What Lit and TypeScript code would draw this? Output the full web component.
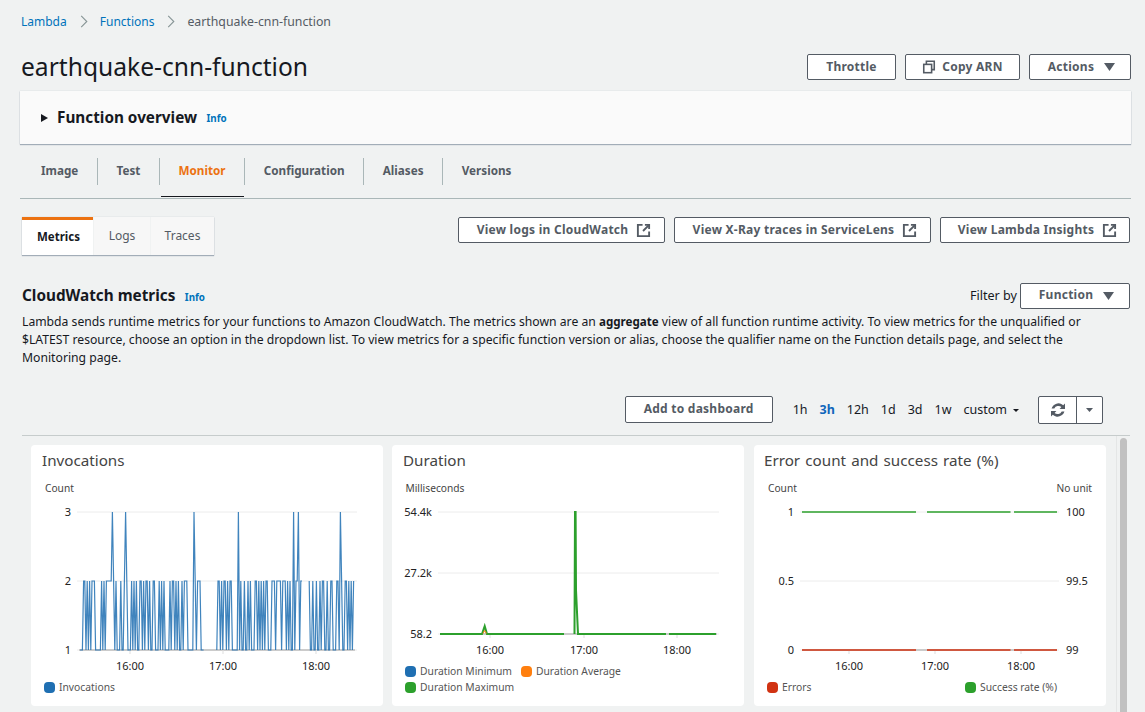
import { LitElement, html, svg, css } from 'lit';
import { customElement } from 'lit/decorators.js';

type Line = { color: string; width?: number; opacity?: number; segments: number[][][] };

interface Chart {
  title: string;
  left: number; // page x of the card, the svg is drawn in page coordinates
  height: number;
  x0: number;
  x1: number;
  grid: { y: number; label: string; right?: string }[];
  ticks: { x: number; label: string }[];
  tickY: number;
  unit: string;
  unitX: number;
  unitRight?: string;
  lines: Line[];
  legend: { color: string; label: string }[][];
  split?: boolean;
}

const BLUE = '#1f6fb2';
const ORANGE = '#ff7f0e';
const GREEN = '#2ca02c';
const RED = '#d13212';

// fixed seed, so the busy invocations line is the same on every run
function invocationSegments(): number[][][] {
  let seed = 20517;
  const rnd = () => {
    seed = (seed * 16807) % 2147483647;
    return seed / 2147483647;
  };
  const spikes = [113, 125.5, 194.5, 238, 294, 298, 340.5];
  const segments: number[][][] = [];
  let current: number[][] = [];
  let v = 2;
  for (let x = 80; x <= 354; x += 1.2) {
    if ((x > 204 && x < 216) || (x > 302 && x < 309)) {
      if (current.length) segments.push(current);
      current = [];
      continue;
    }
    const r = rnd();
    v = v === 2 ? (r < 0.6 ? 1 : 2) : r < 0.7 ? 2 : 1;
    let y = v === 2 ? 581 : 650;
    if (spikes.some((s) => Math.abs(s - x) < 0.6)) y = 512;
    current.push([x, y]);
  }
  if (current.length) segments.push(current);
  return segments;
}

const CHARTS: Chart[] = [
  {
    title: 'Invocations',
    left: 31,
    height: 192,
    x0: 79,
    x1: 355,
    grid: [
      { y: 512, label: '3' },
      { y: 581, label: '2' },
      { y: 650, label: '1' },
    ],
    ticks: [
      { x: 130, label: '16:00' },
      { x: 223, label: '17:00' },
      { x: 316, label: '18:00' },
    ],
    tickY: 666,
    unit: 'Count',
    unitX: 45,
    lines: [{ color: BLUE, width: 1.2, opacity: 0.85, segments: invocationSegments() }],
    legend: [[{ color: BLUE, label: 'Invocations' }]],
  },
  {
    title: 'Duration',
    left: 392,
    height: 183,
    x0: 440,
    x1: 717,
    grid: [
      { y: 512, label: '54.4k' },
      { y: 573, label: '27.2k' },
      { y: 634, label: '58.2' },
    ],
    ticks: [
      { x: 490, label: '16:00' },
      { x: 584, label: '17:00' },
      { x: 677, label: '18:00' },
    ],
    tickY: 650,
    unit: 'Milliseconds',
    unitX: 405.5,
    lines: [
      {
        color: GREEN,
        width: 2,
        segments: [
          [[440, 634], [482, 634], [484.7, 626], [487, 634], [564, 634]],
          [[574.5, 634], [575, 512], [575.6, 512], [576, 590], [578, 634], [666, 634]],
          [[669, 634], [716, 634]],
        ],
      },
      { color: ORANGE, width: 1, segments: [[[483, 633.5], [484.7, 630.5], [486.4, 633.5]]] },
    ],
    legend: [
      [
        { color: BLUE, label: 'Duration Minimum' },
        { color: ORANGE, label: 'Duration Average' },
      ],
      [{ color: GREEN, label: 'Duration Maximum' }],
    ],
  },
  {
    title: 'Error count and success rate (%)',
    left: 754,
    height: 192,
    x0: 802,
    x1: 1057,
    grid: [
      { y: 512, label: '1', right: '100' },
      { y: 581, label: '0.5', right: '99.5' },
      { y: 650, label: '0', right: '99' },
    ],
    ticks: [
      { x: 849, label: '16:00' },
      { x: 935, label: '17:00' },
      { x: 1021, label: '18:00' },
    ],
    tickY: 666,
    unit: 'Count',
    unitX: 768,
    unitRight: 'No unit',
    lines: [
      {
        color: GREEN,
        width: 1.6,
        segments: [
          [[802, 512], [916, 512]],
          [[927, 512], [1010.5, 512]],
          [[1014, 512], [1057, 512]],
        ],
      },
      {
        color: RED,
        width: 1.6,
        segments: [
          [[802, 650], [916, 650]],
          [[927, 650], [1010.5, 650]],
          [[1014, 650], [1057, 650]],
        ],
      },
    ],
    legend: [
      [
        { color: RED, label: 'Errors' },
        { color: GREEN, label: 'Success rate (%)' },
      ],
    ],
    split: true,
  },
];

const externalIcon = html`<svg class="icon ext-icon" viewBox="0 0 16 16" fill="none" stroke="currentColor" stroke-width="2">
  <path d="M7 2H2v12h12V9" /><path d="M9.5 2H14v4.5" /><path d="M14 2L7.5 8.5" />
</svg>`;

const copyIcon = html`<svg class="icon" viewBox="0 0 16 16" fill="none" stroke="currentColor" stroke-width="1.8">
  <rect x="2" y="5" width="9" height="9.5" /><path d="M5 5V1.5h9v9.5h-3" />
</svg>`;

const caret = html`<svg class="caret" viewBox="0 0 10 8" preserveAspectRatio="none">
  <path d="M0 0h10L5 8z" fill="currentColor" />
</svg>`;

const chevron = html`<svg class="chevron" viewBox="0 0 8 14" fill="none" stroke="#879596" stroke-width="1.2">
  <path d="M1 1l6 6-6 6" />
</svg>`;

@customElement('metric-card')
export class MetricCard extends LitElement {
  static properties = { chart: { attribute: false } };
  chart!: Chart;

  static styles = css`
    :host {
      display: flex;
      flex-direction: column;
      width: 352px;
      height: 261px;
      box-sizing: border-box;
      padding: 5px 0 11px;
      background: #fff;
      border-radius: 4px;
      font-family: 'Noto Sans', sans-serif;
    }
    :host(:nth-child(3)) {
      margin-left: 1px;
    }
    :host(:nth-child(3)) .title {
      padding-left: 10px;
      word-spacing: 1.2px;
    }
    .title {
      font-size: 15.2px;
      line-height: 20px;
      color: #444;
      padding-left: 11px;
      white-space: nowrap;
    }
    svg {
      display: block;
      width: 352px;
      flex: none;
      margin-top: 10px;
      font-family: 'Noto Sans', sans-serif;
    }
    .unit {
      font-size: 10.2px;
      fill: #444;
    }
    .label {
      font-size: 11px;
      fill: #222;
    }
    .legend {
      margin-top: auto;
      padding: 0 13px;
    }
    .legend-row {
      display: flex;
      height: 16px;
      align-items: center;
      gap: 9px;
    }
    .legend-row.split {
      justify-content: space-between;
      padding-right: 36px;
    }
    .item {
      display: flex;
      align-items: center;
      gap: 4px;
      font-size: 10.3px;
      color: #555;
      white-space: nowrap;
    }
    .swatch {
      width: 11px;
      height: 11px;
      border-radius: 4px;
    }
  `;

  private renderLine(line: Line) {
    return line.segments.map(
      (seg) => svg`<polyline
        points=${seg.map((p) => p.join(',')).join(' ')}
        fill="none"
        stroke=${line.color}
        stroke-width=${line.width ?? 1.2}
        stroke-opacity=${line.opacity ?? 1}
      />`
    );
  }

  render() {
    const c = this.chart;
    const base = c.grid[c.grid.length - 1].y;
    return html`
      <div class="title">${c.title}</div>
      <svg viewBox="${c.left} 480 352 ${c.height}" height=${c.height}>
        <text class="unit" x=${c.unitX} y="492">${c.unit}</text>
        ${c.unitRight
          ? svg`<text class="unit" x=${c.left + 338} y="492" text-anchor="end">${c.unitRight}</text>`
          : ''}
        ${c.grid.map(
          (g) => svg`
            <line x1=${c.x0 - 2} x2=${c.x1 + 2} y1=${g.y} y2=${g.y} stroke="#ececec" />
            <text class="label" x=${c.x0 - 8} y=${g.y + 4} text-anchor="end">${g.label}</text>
            ${g.right ? svg`<text class="label" x=${c.x1 + 9} y=${g.y + 4}>${g.right}</text>` : ''}
          `
        )}
        <line x1=${c.x0} x2=${c.x1} y1=${base} y2=${base} stroke="#bdbdbd" stroke-width="1.6" />
        ${c.ticks.map(
          (t) => svg`
            <line x1=${t.x} x2=${t.x} y1=${base} y2=${base + 4} stroke="#ddd" />
            <text class="label" x=${t.x} y=${c.tickY + 4} text-anchor="middle">${t.label}</text>
          `
        )}
        ${c.lines.map((l) => this.renderLine(l))}
      </svg>
      <div class="legend">
        ${c.legend.map(
          (row) => html`<div class="legend-row ${c.split ? 'split' : ''}">
            ${row.map(
              (it) => html`<span class="item">
                <span class="swatch" style="background:${it.color}"></span>${it.label}
              </span>`
            )}
          </div>`
        )}
      </div>
    `;
  }
}

@customElement('app-root')
export class AppRoot extends LitElement {
  static styles = css`
    :host {
      display: block;
      width: 1145px;
      height: 712px;
      overflow: hidden;
      background: #f0f2f2;
      font-family: 'Noto Sans', sans-serif;
      color: #16191f;
    }
    .page {
      padding: 14px 14px 0 20px;
    }
    .crumbs {
      display: flex;
      align-items: center;
      height: 14px;
      margin-left: 1px;
      font-size: 12px;
      color: #545b64;
    }
    .crumbs a {
      color: #0073bb;
    }
    .crumbs span {
      font-size: 12.3px;
    }
    .chevron {
      width: 8px;
      height: 13px;
      margin: 0 12px 0 13px;
    }
    .title-row {
      display: flex;
      align-items: center;
      justify-content: space-between;
      height: 26px;
      margin: 26px 0 0 1px;
    }
    h1 {
      margin: 0 0 2px;
      font-size: 24.6px;
      font-weight: 400;
      color: #16191f;
    }
    .btn-group {
      display: flex;
      gap: 9px;
    }
    .btn {
      display: flex;
      align-items: center;
      justify-content: center;
      gap: 9px;
      box-sizing: border-box;
      height: 26px;
      padding-bottom: 2px;
      border: 1px solid #545b64;
      border-radius: 2px;
      background: #fff;
      color: #545b64;
      font-size: 12px;
      font-weight: 700;
      letter-spacing: 0.25px;
      white-space: nowrap;
    }
    .btn.copy {
      gap: 6px;
    }
    .btn.drop {
      gap: 10px;
      padding-left: 3px;
    }
    .btn.ext {
      gap: 8px;
      padding-left: 3px;
    }
    .icon {
      width: 14px;
      height: 14px;
      margin-top: 2px;
    }
    .ext-icon {
      width: 15px;
      height: 15px;
      margin-right: -2px;
    }
    .caret {
      width: 11px;
      height: 8px;
      margin-top: 2px;
    }
    .overview {
      display: flex;
      align-items: center;
      height: 53px;
      margin-top: 11px;
      padding: 0 0 2px 21px;
      box-sizing: border-box;
      background: #fafafa;
      box-shadow: 0 1px 1px rgba(0, 31, 63, 0.3), 0 0 1px rgba(0, 31, 63, 0.2);
    }
    .overview .arrow {
      width: 0;
      height: 0;
      margin: 2px 9px 0 0;
      border-style: solid;
      border-width: 4.5px 0 4.5px 7px;
      border-color: transparent transparent transparent #16191f;
    }
    .overview b,
    .heading-row b {
      font-size: 15.3px;
      font-weight: 700;
    }
    .overview .info {
      margin-top: 4px;
    }
    .info {
      margin-left: 9.5px;
      font-size: 9.8px;
      font-weight: 700;
      color: #0073bb;
    }
    .tabs {
      display: flex;
      align-items: flex-start;
      height: 40px;
      margin-top: 14px;
      padding-left: 2.4px;
      border-bottom: 1px solid #aab7b8;
    }
    .tab {
      position: relative;
      padding: 0 18.6px;
      height: 27px;
      line-height: 25px;
      border-left: 1px solid #aab7b8;
      font-size: 11.7px;
      font-weight: 700;
      color: #545b64;
    }
    .tab:first-child {
      border-left: 0;
    }
    .tab.active {
      color: #ec7211;
    }
    .tab.active::after {
      content: '';
      position: absolute;
      left: 1px;
      right: 0;
      top: 38px;
      height: 1px;
      background: #16191f;
    }
    .sub-row {
      display: flex;
      justify-content: space-between;
      margin: 18px 1px 0 2px;
      height: 38px;
    }
    .subtabs {
      display: flex;
      gap: 1px;
      box-shadow: 0 1px 1px rgba(0, 31, 63, 0.3), 0 0 1px rgba(0, 31, 63, 0.2);
    }
    .subtab {
      display: flex;
      align-items: center;
      justify-content: center;
      box-sizing: border-box;
      height: 38px;
      padding-bottom: 2px;
      background: #f7f7f7;
      font-size: 12px;
      color: #545b64;
    }
    .subtab.active {
      padding-left: 2px;
      background: #fff;
      border-top: 3px solid #ec7211;
      color: #16191f;
      font-size: 11.5px;
      font-weight: 700;
    }
    .heading-row {
      display: flex;
      align-items: center;
      justify-content: space-between;
      height: 27px;
      margin: 27px 1px 0 2px;
    }
    .heading-row > div:first-child {
      padding-bottom: 2px;
    }
    .filter {
      display: flex;
      align-items: center;
      gap: 3px;
      font-size: 12.6px;
    }
    .desc {
      margin: 4px 0 0 2px;
      font-size: 12.2px;
      line-height: 18px;
      white-space: nowrap;
    }
    .desc b {
      font-size: 11.6px;
    }
    .toolbar {
      display: flex;
      align-items: center;
      justify-content: flex-end;
      height: 27px;
      margin-top: 29px;
      padding-right: 28px;
    }
    .range {
      display: flex;
      align-items: center;
      gap: 12px;
      margin: 0 19px 0 20px;
      font-size: 12.5px;
      color: #16191f;
    }
    .range .on {
      color: #1166bb;
      font-weight: 700;
    }
    .range .custom {
      display: flex;
      align-items: center;
      gap: 6px;
    }
    .range .caret {
      width: 6px;
      height: 3px;
    }
    .split-btn {
      display: flex;
      height: 28px;
      box-sizing: border-box;
      border: 1px solid #545b64;
      border-radius: 2px;
      background: #fff;
      color: #545b64;
    }
    .split-btn div {
      display: flex;
      align-items: center;
      justify-content: center;
    }
    .split-btn .refresh {
      width: 37px;
      border-right: 1px solid #545b64;
    }
    .split-btn .more {
      width: 25px;
    }
    .split-btn .more .caret {
      width: 7px;
      height: 4px;
      margin-top: 0;
      color: #545b64;
    }
    .metrics {
      display: flex;
      justify-content: space-between;
      margin: 12px 1px 0 2px;
      border-top: 1px solid #c6cccc;
    }
    .grid {
      display: grid;
      grid-template-columns: 352px 352px 352px;
      column-gap: 9px;
      padding: 9px 0 0 9px;
    }
    .track {
      width: 14px;
      height: 277px;
      box-sizing: border-box;
      padding: 2px 3px 0;
      border-left: 1px solid #e4e6e6;
    }
    .thumb {
      height: 100%;
      background: #c1c1c1;
      border-radius: 4px 4px 0 0;
    }
  `;

  render() {
    return html`
      <div class="page">
        <nav class="crumbs">
          <a>Lambda</a>${chevron}<a>Functions</a>${chevron}<span>earthquake-cnn-function</span>
        </nav>

        <div class="title-row">
          <h1>earthquake-cnn-function</h1>
          <div class="btn-group">
            <div class="btn" style="width:89px">Throttle</div>
            <div class="btn copy" style="width:115px">${copyIcon}Copy ARN</div>
            <div class="btn drop" style="width:102px">Actions${caret}</div>
          </div>
        </div>

        <div class="overview">
          <span class="arrow"></span><b>Function overview</b><span class="info">Info</span>
        </div>

        <div class="tabs">
          <div class="tab">Image</div>
          <div class="tab">Test</div>
          <div class="tab active">Monitor</div>
          <div class="tab">Configuration</div>
          <div class="tab">Aliases</div>
          <div class="tab">Versions</div>
        </div>

        <div class="sub-row">
          <div class="subtabs">
            <div class="subtab active" style="width:71px">Metrics</div>
            <div class="subtab" style="width:56px">Logs</div>
            <div class="subtab" style="width:63px">Traces</div>
          </div>
          <div class="btn-group">
            <div class="btn ext" style="width:207px">View logs in CloudWatch${externalIcon}</div>
            <div class="btn ext" style="width:257px">View X-Ray traces in ServiceLens${externalIcon}</div>
            <div class="btn ext" style="width:190px">View Lambda Insights${externalIcon}</div>
          </div>
        </div>

        <div class="heading-row">
          <div><b>CloudWatch metrics</b><span class="info">Info</span></div>
          <div class="filter">
            Filter by
            <div class="btn drop" style="width:110px">Function${caret}</div>
          </div>
        </div>

        <div class="desc">
          Lambda sends runtime metrics for your functions to Amazon CloudWatch. The metrics shown are an
          <b>aggregate</b> view of all function runtime activity. To view metrics for the unqualified or<br />
          $LATEST resource, choose an option in the dropdown list. To view metrics for a specific function
          version or alias, choose the qualifier name on the Function details page, and select the<br />
          Monitoring page.
        </div>

        <div class="toolbar">
          <div class="btn" style="width:148px; height:27px">Add to dashboard</div>
          <div class="range">
            <span>1h</span><span class="on">3h</span><span>12h</span><span>1d</span><span>3d</span><span>1w</span>
            <span class="custom">custom${caret}</span>
          </div>
          <div class="split-btn">
            <div class="refresh">
              <svg width="16" height="16" viewBox="0 0 16 16" fill="currentColor">
                <path d="M13.2 3.3A7 7 0 0 0 1.6 6.6h2.7A4.5 4.5 0 0 1 11.4 5.1L9.6 6.9H15V1.5z" />
                <path d="M2.8 12.7a7 7 0 0 0 11.6-3.3h-2.7A4.5 4.5 0 0 1 4.6 10.9l1.8-1.8H1v5.4z" />
              </svg>
            </div>
            <div class="more">${caret}</div>
          </div>
        </div>

        <div class="metrics">
          <div class="grid">
            ${CHARTS.map((c) => html`<metric-card .chart=${c}></metric-card>`)}
          </div>
          <div class="track"><div class="thumb"></div></div>
        </div>
      </div>
    `;
  }
}

declare global {
  interface HTMLElementTagNameMap {
    'app-root': AppRoot;
    'metric-card': MetricCard;
  }
}
